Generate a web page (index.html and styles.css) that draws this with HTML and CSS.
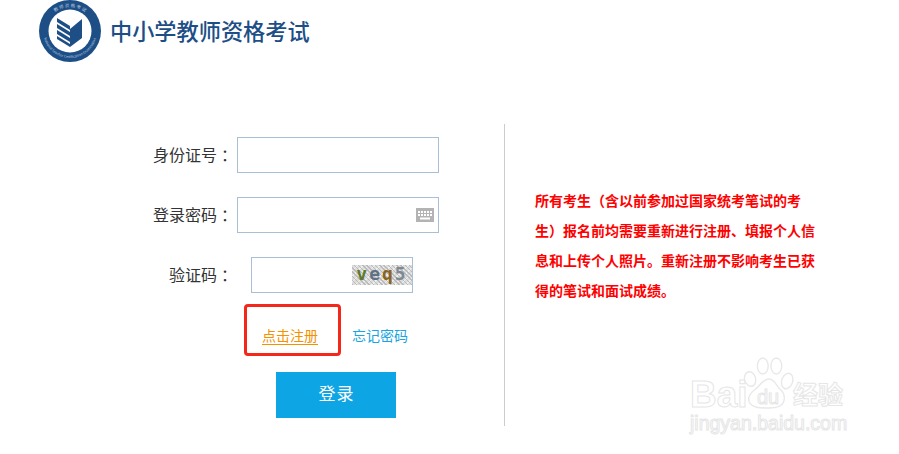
FILE: index.html
```html
<!DOCTYPE html>
<html>
<head>
<meta charset="utf-8">
<title>中小学教师资格考试</title>
<link rel="stylesheet" href="styles.css">
</head>
<body>

<div class="header">
  <svg class="logo" width="62" height="62" viewBox="0 0 62 62">
    <defs>
      <path id="arcTop" d="M7 31 A24 24 0 0 1 55 31"/>
      <path id="arcBottom" d="M4 31 A27 27 0 0 0 58 31"/>
    </defs>
    <circle cx="31" cy="31" r="31" fill="#1d4f86"/>
    <circle cx="31" cy="31" r="21.500" fill="#fff"/>
    <text class="ring-cn"><textPath href="#arcTop" startOffset="50%" text-anchor="middle">教 师 资 格 考 试</textPath></text>
    <text class="ring-en"><textPath href="#arcBottom" startOffset="50%" text-anchor="middle">National Teacher Certification Examination</textPath></text>
    <path d="M31 29 L43 19 V38 L31 47 Z" fill="#1d4f86"/>
    <path d="M18 18 L31 26 V30 L18 22 Z M18 24 L31 32 V36 L18 28 Z M18 30 L31 38 V42 L18 34 Z M18 36 L31 44 V47 L18 39 Z" fill="#1d4f86"/>
  </svg>
  <div class="site-title">中小学教师资格考试</div>
</div>

<div class="main">
  <div class="login">
    <div class="row">
      <label class="row-label">身份证号<span class="colon">：</span></label>
      <div class="field"></div>
    </div>
    <div class="row">
      <label class="row-label">登录密码<span class="colon">：</span></label>
      <div class="field field-pwd">
        <svg width="18" height="14" viewBox="0 0 18 14">
          <rect width="18" height="14" fill="#b3b3b3"/>
          <path d="M2 3h2v2H2z M5 3h2v2H5z M8 3h2v2H8z M11 3h2v2h-2z M14 3h2v2h-2z M2 6h2v2H2z M5 6h2v2H5z M8 6h2v2H8z M11 6h2v2h-2z M14 6h2v2h-2z M4 9.500h10v2H4z" fill="#fff"/>
        </svg>
      </div>
    </div>
    <div class="row">
      <label class="row-label">验证码<span class="colon">：</span></label>
      <div class="field field-code">
        <div class="captcha"><span class="c1">v</span><span class="c2">e</span><span class="c3">q</span><span class="c4">5</span></div>
      </div>
    </div>
    <div class="links">
      <div class="mark"><a class="reg-link" href="#">点击注册</a></div>
      <a class="forget-link" href="#">忘记密码</a>
    </div>
    <div class="btn">登录</div>
  </div>

  <div class="notice">所有考生（含以前参加过国家统考笔试的考生）报名前均需要重新进行注册、填报个人信息和上传个人照片。重新注册不影响考生已获得的笔试和面试成绩。</div>
</div>

<div class="watermark">
  <div class="wm-top">
    <span class="wm-bai">Bai</span>
    <div class="wm-paw">
      <svg width="56" height="62" viewBox="0 0 62 62" preserveAspectRatio="none">
        <g fill="#fff" stroke="#e8e8e8" stroke-width="1.500">
          <ellipse cx="9" cy="25" rx="6" ry="7.500" transform="rotate(-25 9 25)"/>
          <ellipse cx="23" cy="12" rx="6" ry="8"/>
          <ellipse cx="38" cy="12" rx="6" ry="8"/>
          <ellipse cx="50" cy="27" rx="6" ry="8" transform="rotate(25 50 27)"/>
          <path d="M30 25 C36 25 38 32 42 35 C47 39 48 43 46 48 C44 53 38 54 30 54 C20 54 11 54 8 48 C6 43 9 39 15 35 C20 32 23 25 30 25 Z"/>
        </g>
      </svg>
      <span class="wm-du">du</span>
    </div>
    <span class="wm-cn">经验</span>
  </div>
  <div class="wm-url">jingyan.baidu.com</div>
</div>

</body>
</html>
```

FILE: styles.css
```css
body {
   margin: 0;
   background-color: #fff;
   font-family: "Noto Sans CJK SC", "Liberation Sans", sans-serif;
   font-size: 16px;
   color: #333;
   overflow: hidden;
}

a {
   text-decoration: none;
}

.header {
   display: flex;
   align-items: center;
   height: 62px;
   padding-left: 39px;
}

.logo {
   flex: none;
}

.ring-cn {
   font-size: 4.500px;
   fill: #b9cbe0;
}

.ring-en {
   font-size: 3.500px;
   fill: #b9cbe0;
}

.site-title {
   margin: -2px 0 0 9px;
   font-size: 22.200px;
   font-weight: 500;
   color: #1d4f86;
   white-space: nowrap;
}

.main {
   display: flex;
   margin-top: 62px;
}

.login {
   width: 504px;
   height: 289px;
   padding-top: 13px;
   border-right: 1px solid #ccc;
}

.row {
   display: flex;
   align-items: center;
   height: 36px;
   margin-bottom: 24px;
}

.row-label {
   width: 237px;
   flex: none;
   box-sizing: border-box;
   padding-bottom: 2px;
   text-align: right;
   line-height: 34px;
}

.colon {
   margin-left: 4px;
}

.field {
   display: flex;
   align-items: center;
   justify-content: flex-end;
   box-sizing: border-box;
   width: 202px;
   height: 36px;
   border: 1px solid #a9bfd6;
   background-color: #fff;
}

.field-pwd {
   padding-right: 4px;
}

.field-code {
   width: 162px;
   margin-left: 14px;
}

.captcha {
   display: flex;
   justify-content: center;
   width: 60px;
   height: 20px;
   font-family: "DejaVu Sans Mono", monospace;
   font-size: 18px;
   font-weight: bold;
   letter-spacing: 2px;
   line-height: 18px;
   background-color: #dcdcdc;
   background-image:
      repeating-linear-gradient(45deg, #bbb 0 1px, transparent 1px 3px),
      repeating-linear-gradient(-45deg, #f0f0f0 0 1px, transparent 1px 4px);
}

.c1 { color: #5c7a2c; }
.c2 { color: #5f7184; }
.c3 { color: #8a6420; }
.c4 { color: #7d8890; }

.links {
   display: flex;
   align-items: center;
   margin: -13px 0 0 244px;
}

.mark {
   display: flex;
   align-items: flex-end;
   box-sizing: border-box;
   width: 97px;
   height: 52px;
   padding: 0 0 8px 15px;
   border: 3px solid #f5261a;
   border-radius: 4px;
}

.reg-link {
   font-size: 14px;
   line-height: 17px;
   color: #f59100;
   border-bottom: 1px solid #f59100;
}

.forget-link {
   margin: 10px 0 0 11px;
   font-size: 14px;
   color: #18a5e0;
}

.btn {
   width: 120px;
   height: 46px;
   margin: 16px 0 0 276px;
   padding-left: 1px;
   box-sizing: border-box;
   background-color: #0ea5e4;
   color: #fff;
   font-size: 17px;
   letter-spacing: 1px;
   line-height: 41px;
   text-align: center;
}

.notice {
   width: 281px;
   margin: 61px 0 0 30px;
   font-size: 14px;
   font-weight: bold;
   line-height: 30px;
   color: #f00;
   text-spacing-trim: space-all;
}

.watermark {
   position: absolute;
   left: 690px;
   top: 354px;
   width: 170px;
   color: #fff;
   -webkit-text-stroke: 1px #e6e6e6;
}

.wm-top {
   display: flex;
   align-items: flex-end;
   height: 54px;
}

.wm-bai {
   width: 53px;
   margin-bottom: -8px;
   font-family: "Liberation Sans", sans-serif;
   font-size: 37px;
   font-weight: bold;
   line-height: 42px;
}

.wm-paw {
   position: relative;
   width: 50px;
   height: 54px;
}

.wm-paw svg {
   position: absolute;
   left: -1px;
   top: 0;
}

.wm-du {
   position: absolute;
   left: 14px;
   top: 31px;
   font-family: "Liberation Sans", sans-serif;
   font-size: 20px;
   line-height: 24px;
}

.wm-cn {
   margin-bottom: -6px;
   font-size: 25px;
   font-weight: bold;
   line-height: 42px;
   white-space: nowrap;
}

.wm-url {
   margin-top: 2px;
   font-family: "Liberation Sans", sans-serif;
   font-size: 19.500px;
   line-height: 26px;
   white-space: nowrap;
}
```
